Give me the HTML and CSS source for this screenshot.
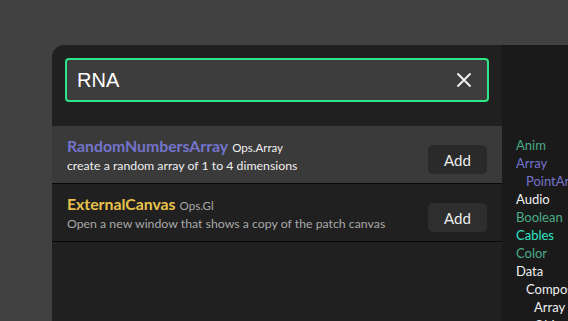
FILE: index.html
```html
<!DOCTYPE html>
<html lang="en">
  <head>
    <meta charset="UTF-8" />
    <meta name="viewport" content="width=device-width, initial-scale=1.0" />
    <title>Op Search</title>
    <link rel="stylesheet" href="styles.css">
  </head>
  <body>
    <div class="modal">
      <div class="main">
        <div class="search">
          <div class="search-box">
            <span class="search-text">RNA</span>
            <svg class="clear" width="16" height="16" viewBox="0 0 16 16">
              <path d="M1.5 1.5 L14.5 14.5 M14.5 1.5 L1.5 14.5" stroke="#f0f0f0" stroke-width="2" fill="none" />
            </svg>
          </div>
        </div>

        <div class="results">
          <div class="row active">
            <div class="info">
              <p class="title"><span class="name array">RandomNumbersArray</span> <span class="ns">Ops.Array</span></p>
              <p class="desc">create a random array of 1 to 4 dimensions</p>
            </div>
            <button class="add">Add</button>
          </div>
          <div class="row">
            <div class="info">
              <p class="title"><span class="name gl">ExternalCanvas</span> <span class="ns dim">Ops.Gl</span></p>
              <p class="desc dim">Open a new window that shows a copy of the patch canvas</p>
            </div>
            <button class="add">Add</button>
          </div>
        </div>
      </div>

      <div class="side">
        <p class="cat anim">Anim</p>
        <p class="cat array">Array</p>
        <p class="cat array sub">PointArray</p>
        <p class="cat">Audio</p>
        <p class="cat anim">Boolean</p>
        <p class="cat cables">Cables</p>
        <p class="cat anim">Color</p>
        <p class="cat">Data</p>
        <p class="cat sub">Compose</p>
        <p class="cat sub2">Array</p>
        <p class="cat sub2">Object</p>
      </div>
    </div>
  </body>
</html>
```

FILE: styles.css
```css
* {
  margin: 0;
  padding: 0;
  box-sizing: border-box;
}
body {
  font-family: Lato, "Open Sans", sans-serif;
  background-color: #414141;
  height: 100vh;
  overflow: hidden;
  padding: 45px 0 0 52px;
}
.modal {
  display: flex;
  height: 276px;
  background-color: #202020;
  border-top-left-radius: 12px;
  overflow: hidden;
}
.main {
  width: 450px;
  flex-shrink: 0;
}
.search {
  padding: 13px 13px 24px;
}
.search-box {
  display: flex;
  align-items: center;
  justify-content: space-between;
  height: 44px;
  padding: 0 15px 0 10px;
  background-color: #3d3d3d;
  border: 2px solid #2ee486;
  border-radius: 4px;
}
.search-text {
  font-family: "Liberation Sans", Arial, sans-serif;
  font-size: 20px;
  color: #ffffff;
}
.clear {
  display: block;
}
.row {
  display: flex;
  align-items: center;
  justify-content: space-between;
  height: 58px;
  padding: 0 15px 0 15px;
  border-bottom: 1px solid #080808;
}
.row.active {
  background-color: #3a3a3a;
}
.info {
  padding-top: 2px;
}
.title {
  line-height: 18px;
}
.name {
  font-size: 15.8px;
  font-weight: bold;
}
.name.array {
  color: #7474cc;
}
.name.gl {
  color: #e8c24a;
}
.ns {
  font-size: 11.5px;
  color: #f0f0f0;
}
.desc {
  font-size: 12.3px;
  line-height: 18px;
  color: #f0f0f0;
}
.dim {
  color: #a8a8a8;
}
.add {
  width: 59px;
  height: 29px;
  margin-top: 10px;
  border: none;
  border-radius: 5px;
  background-color: #2a2a2a;
  color: #ececec;
  font-family: Lato, "Open Sans", sans-serif;
  font-size: 15px;
}
.row:not(.active) .add {
  background-color: #2e2e2e;
}
.side {
  flex: 1;
  background-color: #1a1a1a;
  padding: 91px 0 0 14px;
  white-space: nowrap;
}
.cat {
  font-size: 13px;
  line-height: 18px;
  color: #f0f0f0;
}
.cat.anim {
  color: #4aab86;
}
.cat.array {
  color: #7474cc;
}
.cat.cables {
  color: #2ee8c8;
}
.sub {
  padding-left: 10px;
}
.sub2 {
  padding-left: 18px;
}
```
